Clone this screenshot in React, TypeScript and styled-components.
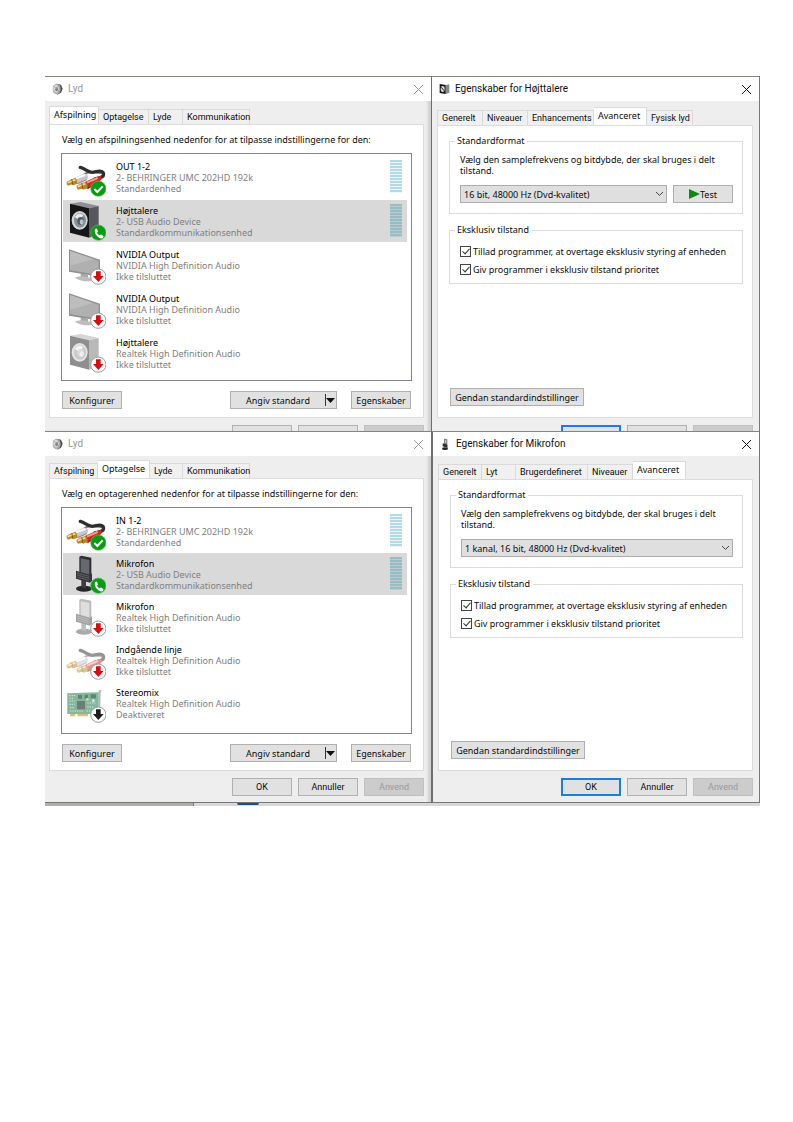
import React, { useState } from "react";
import styled, { createGlobalStyle, css } from "styled-components";

const GlobalStyle = createGlobalStyle`
  *, *::before, *::after { box-sizing: border-box; }
  body {
    margin: 0;
    background: #fff;
    color: #0c0c0c;
    font: 9px/11px "Noto Sans", "Open Sans", sans-serif;
  }
  button, select, input { font: inherit; color: inherit; margin: 0; }
`;

const Page = styled.main`
  padding: 76px 33px 40px 45px;
`;

const WindowGrid = styled.div`
  display: grid;
  grid-template-columns: minmax(0, 386fr) minmax(0, 329fr);
`;

const Window = styled.section<{ $active?: boolean; $clipped?: boolean }>`
  display: flex;
  flex-direction: column;
  background: #eeeeee;
  border-top: 1px solid #85857f;
  ${({ $active, $clipped }) =>
    $active
      ? css`
          border-left: ${$clipped ? 1 : 2}px solid #6e6e6e;
          border-right: 1px solid #777;
        `
      : css`
          box-shadow: inset -4px 0 3px -1px #cfcfcf;
        `}
`;

const TitleBar = styled.header<{ $active?: boolean }>`
  display: flex;
  align-items: center;
  gap: 5px;
  height: 24px;
  padding: 0 8px 0 7px;
  background: #fff;
  color: ${({ $active }) => ($active ? "#111" : "#999")};
`;

const Title = styled.h2`
  flex: 1;
  margin: 0;
  font: 400 10px/14px Roboto, "Noto Sans", sans-serif;
`;

const CloseButton = styled.button`
  display: flex;
  padding: 0;
  border: 0;
  background: none;
`;

const TabStrip = styled.div<{ $height: number; $active?: boolean }>`
  display: flex;
  align-items: flex-end;
  height: ${({ $height }) => $height}px;
  padding-left: ${({ $active }) => ($active ? 5 : 4)}px;
`;

const Tab = styled.button<{ $width: number }>`
  width: ${({ $width }) => $width}px;
  height: 15px;
  padding: 0 0 0 4px;
  border: 1px solid #dadada;
  border-bottom: 0;
  background: #f0f0f0;
  font-family: Roboto, "Noto Sans", sans-serif;
  text-align: left;
  white-space: nowrap;
  & + & { border-left: 0; }
  &[aria-selected="true"] {
    height: 18px;
    padding-bottom: 2px;
    background: #fff;
    font-family: "Noto Sans", sans-serif;
  }
`;

const Panel = styled.div<{ $active?: boolean }>`
  display: flex;
  flex: 1;
  flex-direction: column;
  min-height: 292px;
  margin: ${({ $active }) => ($active ? "0 6px 0 5px" : "0 7px 0 4px")};
  padding: 9px 11px 8px;
  border: 1px solid #dcdcdc;
  background: #fff;
`;

const Intro = styled.p`
  margin: 0 0 7px 1px;
  line-height: 12px;
`;

const DeviceList = styled.ul<{ $gap: number }>`
  display: flex;
  flex: 1;
  flex-direction: column;
  gap: ${({ $gap }) => $gap}px;
  margin: 0;
  padding: 2px 4px 6px 1px;
  border: 1px solid #82868c;
  list-style: none;
`;

const DeviceRow = styled.li<{ $selected?: boolean }>`
  display: flex;
  align-items: flex-start;
  height: 42px;
  padding: 1px 5px 0 3px;
  background: ${({ $selected }) => ($selected ? "#d9d9d9" : "transparent")};
`;

const DeviceText = styled.div`
  flex: 1;
  padding: 4px 0 0 10px;
  color: #808080;
  white-space: nowrap;
`;

const DeviceName = styled.div`
  color: #000;
`;

const Meter = styled.div<{ $selected?: boolean }>`
  width: 12px;
  height: 33px;
  margin-top: 3px;
  background: ${({ $selected }) =>
    $selected
      ? "repeating-linear-gradient(#98bcc4 0 2px, #bccbcd 2px 3px)"
      : "repeating-linear-gradient(#b3d9e6 0 2px, #eef6f8 2px 3px)"};
`;

const ButtonRow = styled.div`
  display: flex;
  justify-content: space-between;
  margin-top: 10px;
  padding: 0 1px;
`;

const ButtonPair = styled.div`
  display: flex;
  gap: 14px;
`;

const Button = styled.button<{ $wide?: boolean; $primary?: boolean }>`
  display: flex;
  align-items: center;
  justify-content: center;
  width: ${({ $wide }) => ($wide ? 134 : 60)}px;
  height: 18px;
  padding: 0;
  border: ${({ $primary }) => ($primary ? "2px solid #1a7fdc" : "1px solid #b0b0b0")};
  background: #e1e1e1;
  white-space: nowrap;
  &:disabled {
    border-color: #c0c0c0;
    background: #cccccc;
    color: #999;
  }
`;

const SplitButton = styled.div`
  display: flex;
  align-items: center;
  width: 107px;
  height: 18px;
  border: 1px solid #b0b0b0;
  background: #e1e1e1;
`;

const SplitMain = styled.button`
  flex: 1;
  padding: 0;
  border: 0;
  background: none;
`;

const SplitArrow = styled.button`
  display: flex;
  align-items: center;
  height: 12px;
  padding: 0 1px 0 0;
  border: 0;
  border-left: 1px solid #333;
  background: none;
`;

const Footer = styled.footer<{ $active?: boolean; $clipped?: boolean }>`
  display: flex;
  justify-content: flex-end;
  gap: 6px;
  padding: 7px ${({ $active }) => ($active ? 6 : 7)}px 6px;
  font-family: Roboto, "Noto Sans", sans-serif;
  ${({ $clipped }) =>
    $clipped
      ? css`
          height: 13px;
          overflow: hidden;
        `
      : css`
          border-bottom: 1px solid #777;
        `}
`;

const Group = styled.fieldset<{ $last?: boolean }>`
  min-width: 0;
  margin: 0 -2px ${({ $last }) => ($last ? 0 : 10)}px 0;
  padding: 0 9px ${({ $last }) => ($last ? 5 : 10)}px 10px;
  border: 1px solid #dcdcdc;
`;

const Legend = styled.legend`
  margin-left: -5px;
  padding: 0 3px 0 2px;
  line-height: 12px;
`;

const FormatText = styled.p`
  margin: 7px 0 9px;
`;

const FormatRow = styled.div`
  display: flex;
  gap: 6px;
`;

const SelectBox = styled.div`
  position: relative;
  flex: 1;
  svg {
    position: absolute;
    top: 7px;
    right: 4px;
    pointer-events: none;
  }
`;

const Select = styled.select`
  display: block;
  appearance: none;
  width: 100%;
  height: 18px;
  padding: 0 16px 0 3px;
  border: 1px solid #adadad;
  border-radius: 0;
  background: #dfdfdf;
`;

const CheckRow = styled.label<{ $first?: boolean }>`
  display: flex;
  align-items: center;
  gap: 2px;
  height: 18px;
  margin-top: ${({ $first }) => ($first ? 6 : 0)}px;
  white-space: nowrap;
`;

const Checkbox = styled.input`
  position: relative;
  appearance: none;
  width: 11px;
  height: 11px;
  border: 1px solid #444;
  background: #fff;
  &:checked::after {
    content: "";
    position: absolute;
    top: 0;
    left: 3px;
    width: 4px;
    height: 7px;
    border: solid #333;
    border-width: 0 1px 1px 0;
    transform: rotate(42deg);
  }
`;

const RestoreRow = styled.div`
  margin: auto 0 3px 1px;
`;

const DesktopStrip = styled.div`
  display: flex;
  height: 3px;
  background: #d8d8d8;
  &::before {
    content: "";
    flex: 0 1 149px;
    border-right: 1px solid #777;
    background: #b3b0a6;
  }
  &::after {
    content: "";
    width: 22px;
    height: 2px;
    margin-left: 43px;
    border-radius: 0 0 6px 6px;
    background: #1f4e80;
  }
`;

/* ---------- drawings ---------- */

type BadgeKind = "ok" | "phone" | "unplugged" | "disabled";
type Device = "cable" | "speaker" | "monitor" | "mic" | "card";

function Badge({ kind }: { kind: BadgeKind }) {
  if (kind === "ok" || kind === "phone") {
    return (
      <g>
        <circle cx="97" cy="95" r="23" fill="#0b9a14" stroke="#5fbf62" strokeWidth="2" />
        {kind === "ok" ? (
          <path d="M85 96l9 9 16-17" fill="none" stroke="#fff" strokeWidth="6" />
        ) : (
          <path
            d="M87 85q4-5 7 1l2 5q0 3-3 4 3 6 9 8 2-4 5-2l5 4q2 3-2 6-6 4-15-4-12-11-8-22z"
            fill="#fff"
          />
        )}
      </g>
    );
  }
  return (
    <g>
      <circle cx="97" cy="95" r="23" fill="#fff" stroke="#9a9a9a" strokeWidth="3" />
      <path
        d="M90 79h14v14h9L97 111 81 93h9z"
        fill={kind === "disabled" ? "#1c1c1c" : "#d90d0d"}
      />
    </g>
  );
}

function Cable() {
  return (
    <g>
      <path d="M52 54q12-10 26-9l34 4" fill="none" stroke="#77777b" strokeWidth="6" />
      <path
        d="M43 31C58 35 64 46 78 46c14-1 26-8 33 0 6 12-6 18-24 20"
        fill="none"
        stroke="#2e2e2e"
        strokeWidth="10"
        strokeLinecap="round"
      />
      <path d="M26 62l28-12q10-1 12 8 0 9-4 12L38 82l-12-3z" fill="#c6c6cc" />
      <path d="M30 64l28-10" stroke="#fafafa" strokeWidth="6" />
      <path d="M34 80l28-12" stroke="#8c8c92" strokeWidth="3" />
      <path d="M2 74l14-7 12-4q8 8 5 18l-11 4-4-3-12 4q-6-4-4-12z" fill="#bd842a" />
      <path d="M5 77l12-5 11-4" stroke="#f6e08f" strokeWidth="5" fill="none" />
      <path d="M17 68q4 8 2 15" stroke="#80560f" strokeWidth="3" fill="none" />
      <path d="M58 74l30-13 16-5 4 9-10 12-32 19-10-4z" fill="#c92c22" />
      <path d="M63 77l32-14" stroke="#f59c8c" strokeWidth="6" />
      <path d="M66 93l26-14" stroke="#8e1a14" strokeWidth="3" />
      <path d="M32 86l14-7 12-4q9 8 6 18l-12 5-4-3-12 3q-6-4-4-12z" fill="#bd842a" />
      <path d="M35 89l12-5 11-4" stroke="#f6e08f" strokeWidth="5" fill="none" />
      <path d="M47 80q4 8 2 15" stroke="#80560f" strokeWidth="3" fill="none" />
    </g>
  );
}

function Speaker({ faded }: { faded?: boolean }) {
  return (
    <g>
      <path d="M12 8L44 3l54 12-28 7z" fill={faded ? "#d6d6d6" : "#8d8f94"} />
      <path d="M70 22l28-7v80l-28 15z" fill={faded ? "#b9b9b9" : "#55575c"} />
      <path d="M12 8l58 14v88L12 95z" fill={faded ? "#8e8e8e" : "#161616"} />
      <ellipse cx="41" cy="58" rx="24" ry="28" fill={faded ? "#e4e4e4" : "#d2d6da"} />
      <ellipse cx="42" cy="58" rx="18" ry="22" fill={faded ? "#c9c9c9" : "#8a9097"} />
      <path d="M26 48q12-18 26-6l-10 16z" fill={faded ? "#f4f4f4" : "#e8ecef"} />
      <ellipse cx="44" cy="60" rx="10" ry="12" fill={faded ? "#dcdcdc" : "#555b62"} />
      <ellipse cx="47" cy="63" rx="6" ry="8" fill={faded ? "#efefef" : "#b9c0c6"} />
    </g>
  );
}

function Monitor() {
  return (
    <g>
      <path d="M44 84l22 6v10l-22-4z" fill="#a8a8a8" />
      <path d="M26 98q16-10 52 2l-2 8q-26 4-50-10z" fill="#bdbdbd" />
      <path d="M9 13l93 31v51L9 80z" fill="#8f8f8f" />
      <path d="M12 18l86 29v43L12 76z" fill="#b0b0b0" />
      <path d="M12 18l70 24L12 62z" fill="#bdbdbd" />
    </g>
  );
}

function Mic({ faded }: { faded?: boolean }) {
  return (
    <g>
      <ellipse cx="54" cy="104" rx="24" ry="9" fill={faded ? "#aaa" : "#25272a"} />
      <path d="M46 68l14 3v32l-14-3z" fill={faded ? "#bdbdbd" : "#3b3d40"} />
      <path d="M40 8l6-3 30 6v60l-4 4-32-8z" fill={faded ? "#bcbcbc" : "#2c2e31"} />
      <path d="M44 13l26 5v46l-26-6z" fill={faded ? "#dedede" : "#66696e"} />
      <path d="M30 50l42 12 6-4v22l-6 6-42-12z" fill={faded ? "#a2a2a2" : "#34363a"} />
      <path
        d="M33 57l36 10M33 63l36 10M33 69l36 10"
        stroke={faded ? "#c8c8c8" : "#74777b"}
        strokeWidth="2"
      />
    </g>
  );
}

function Card() {
  return (
    <g>
      <path d="M98 22h10l-4 4-2 70h-4z" fill="#b4b4b4" />
      <path d="M4 31l94-3v62l-30 3H4z" fill="#86b69c" />
      <path d="M12 93h16v7H12zM34 93h32v7H34z" fill="#d8bf7a" />
      <path d="M33 54h24v25H33z" fill="#707a78" />
      <path
        d="M10 38h18M10 46h14M10 54h16M10 64h16M12 74h14M12 84h40M62 84h26M64 60h24M64 72h20"
        stroke="#d4ebdd"
        strokeWidth="3"
        strokeDasharray="4 3"
      />
      <path d="M36 36h12v11H36zM56 35h10v12H56zM74 34h16v12H74z" fill="#57896f" />
      <circle cx="64" cy="49" r="4" fill="#e8d9a0" />
      <circle cx="82" cy="53" r="4" fill="#dfe9e2" />
    </g>
  );
}

function DeviceIcon({ device, badge }: { device: Device; badge: BadgeKind }) {
  const faded = badge === "unplugged" || badge === "disabled";
  return (
    <svg width="40" height="40" viewBox="0 0 120 120" aria-hidden="true">
      {device === "cable" && (
        <g opacity={faded ? 0.5 : 1}>
          <Cable />
        </g>
      )}
      {device === "speaker" && <Speaker faded={faded} />}
      {device === "monitor" && <Monitor />}
      {device === "mic" && <Mic faded={faded} />}
      {device === "card" && <Card />}
      <Badge kind={badge} />
    </svg>
  );
}

function SoundIcon() {
  return (
    <svg width="11" height="12" viewBox="0 0 33 36" aria-hidden="true">
      <path d="M14 2l13 3 5 12-5 12-11 6z" fill="#4c4c4c" />
      <ellipse cx="14" cy="18" rx="12" ry="16" fill="#a9abad" />
      <ellipse cx="12" cy="17" rx="8" ry="11" fill="#dadcde" />
      <ellipse cx="14" cy="19" rx="4" ry="6" fill="#7f8387" />
      <path d="M4 8l20 20M4 28L22 6" stroke="#8b8e91" strokeWidth="2" />
    </svg>
  );
}

function SpeakerSmall() {
  return (
    <svg width="11" height="12" viewBox="0 0 33 36" aria-hidden="true">
      <path d="M20 6l11-2v25l-11 4z" fill="#85888c" />
      <path d="M2 3l18 3v27L2 30z" fill="#151515" />
      <ellipse cx="11" cy="18" rx="6" ry="9" fill="#d5dadd" />
      <path d="M7 13l8 10" stroke="#222" strokeWidth="3" />
    </svg>
  );
}

function MicSmall() {
  return (
    <svg width="11" height="12" viewBox="0 0 33 36" aria-hidden="true">
      <ellipse cx="15" cy="32" rx="9" ry="4" fill="#222" />
      <path d="M12 2l10 2v26l-10-2z" fill="#7b7e82" />
      <path d="M8 16l14 4v9L8 25z" fill="#2f3134" />
      <path d="M15 6l4 1v8l-4-1z" fill="#c9ccce" />
    </svg>
  );
}

function CloseIcon() {
  return (
    <svg width="9" height="9" viewBox="0 0 9 9" aria-hidden="true">
      <path d="M0 0l9 9M9 0L0 9" fill="none" stroke="currentColor" />
    </svg>
  );
}

function Chevron() {
  return (
    <svg width="7" height="4" viewBox="0 0 7 4" aria-hidden="true">
      <path d="M0 0l3.500 3.400L7 0" fill="none" stroke="#444" />
    </svg>
  );
}

/* ---------- windows ---------- */

type TabInfo = [label: string, width: number];

interface FrameProps {
  title: string;
  icon: React.ReactNode;
  tabs: TabInfo[];
  current: string;
  active?: boolean;
  clipped?: boolean;
  children: React.ReactNode;
}

function DialogWindow({ title, icon, tabs, current, active, clipped, children }: FrameProps) {
  const stripHeight = (clipped ? 23 : 22) + (active ? 1 : 0);
  return (
    <Window $active={active} $clipped={clipped} aria-label={title}>
      <TitleBar $active={active}>
        {icon}
        <Title>{title}</Title>
        <CloseButton aria-label="Luk">
          <CloseIcon />
        </CloseButton>
      </TitleBar>
      <TabStrip role="tablist" $height={stripHeight} $active={active}>
        {tabs.map(([label, width]) => (
          <Tab key={label} role="tab" aria-selected={label === current} $width={width}>
            {label}
          </Tab>
        ))}
      </TabStrip>
      <Panel role="tabpanel" $active={active}>
        {children}
      </Panel>
      <Footer $active={active} $clipped={clipped}>
        <Button $primary={active} aria-label="OK">{clipped ? null : "OK"}</Button>
        <Button aria-label="Annuller">{clipped ? null : "Annuller"}</Button>
        <Button aria-label="Anvend" disabled>{clipped ? null : "Anvend"}</Button>
      </Footer>
    </Window>
  );
}

interface DeviceInfo {
  name: string;
  driver: string;
  status: string;
  device: Device;
  badge: BadgeKind;
}

function SoundPanel({ intro, devices, gap }: { intro: string; devices: DeviceInfo[]; gap: number }) {
  return (
    <>
      <Intro>{intro}</Intro>
      <DeviceList $gap={gap}>
        {devices.map((d, i) => (
          <DeviceRow key={i} $selected={d.badge === "phone"}>
            <DeviceIcon device={d.device} badge={d.badge} />
            <DeviceText>
              <DeviceName>{d.name}</DeviceName>
              <div>{d.driver}</div>
              <div>{d.status}</div>
            </DeviceText>
            {(d.badge === "ok" || d.badge === "phone") && <Meter $selected={d.badge === "phone"} />}
          </DeviceRow>
        ))}
      </DeviceList>
      <ButtonRow>
        <Button>Konfigurer</Button>
        <ButtonPair>
          <SplitButton>
            <SplitMain>Angiv standard</SplitMain>
            <SplitArrow aria-label="Flere valg">
              <svg width="9" height="5" viewBox="0 0 9 5" aria-hidden="true">
                <path d="M0 0h9L4.500 5z" fill="#111" />
              </svg>
            </SplitArrow>
          </SplitButton>
          <Button>Egenskaber</Button>
        </ButtonPair>
      </ButtonRow>
    </>
  );
}

function AdvancedPanel({ format, testable }: { format: string; testable?: boolean }) {
  const [override, setOverride] = useState(true);
  const [priority, setPriority] = useState(true);
  return (
    <>
      <Group>
        <Legend>Standardformat</Legend>
        <FormatText>Vælg den samplefrekvens og bitdybde, der skal bruges i delt tilstand.</FormatText>
        <FormatRow>
          <SelectBox>
            <Select aria-label="Standardformat">
              <option>{format}</option>
            </Select>
            <Chevron />
          </SelectBox>
          {testable && (
            <Button>
              <svg width="11" height="10" viewBox="0 0 11 10" aria-hidden="true">
                <path d="M0 0l11 5-11 5z" fill="#0a8a12" />
              </svg>
              Test
            </Button>
          )}
        </FormatRow>
      </Group>
      <Group $last>
        <Legend>Eksklusiv tilstand</Legend>
        <CheckRow $first>
          <Checkbox type="checkbox" checked={override} onChange={() => setOverride(!override)} />
          Tillad programmer, at overtage eksklusiv styring af enheden
        </CheckRow>
        <CheckRow>
          <Checkbox type="checkbox" checked={priority} onChange={() => setPriority(!priority)} />
          Giv programmer i eksklusiv tilstand prioritet
        </CheckRow>
      </Group>
      <RestoreRow>
        <Button $wide>Gendan standardindstillinger</Button>
      </RestoreRow>
    </>
  );
}

const behringer = "2- BEHRINGER UMC 202HD 192k";
const usb = "2- USB Audio Device";
const nvidia = "NVIDIA High Definition Audio";
const realtek = "Realtek High Definition Audio";

const playback: DeviceInfo[] = [
  { name: "OUT 1-2", driver: behringer, status: "Standardenhed", device: "cable", badge: "ok" },
  { name: "Højttalere", driver: usb, status: "Standardkommunikationsenhed", device: "speaker", badge: "phone" },
  { name: "NVIDIA Output", driver: nvidia, status: "Ikke tilsluttet", device: "monitor", badge: "unplugged" },
  { name: "NVIDIA Output", driver: nvidia, status: "Ikke tilsluttet", device: "monitor", badge: "unplugged" },
  { name: "Højttalere", driver: realtek, status: "Ikke tilsluttet", device: "speaker", badge: "unplugged" },
];

const recording: DeviceInfo[] = [
  { name: "IN 1-2", driver: behringer, status: "Standardenhed", device: "cable", badge: "ok" },
  { name: "Mikrofon", driver: usb, status: "Standardkommunikationsenhed", device: "mic", badge: "phone" },
  { name: "Mikrofon", driver: realtek, status: "Ikke tilsluttet", device: "mic", badge: "unplugged" },
  { name: "Indgående linje", driver: realtek, status: "Ikke tilsluttet", device: "cable", badge: "unplugged" },
  { name: "Stereomix", driver: realtek, status: "Deaktiveret", device: "card", badge: "disabled" },
];

export default function App() {
  return (
    <Page>
      <GlobalStyle />
      <WindowGrid>
        <DialogWindow
          title="Lyd"
          icon={<SoundIcon />}
          tabs={[["Afspilning", 50], ["Optagelse", 50], ["Lyde", 34], ["Kommunikation", 67]]}
          current="Afspilning"
          clipped
        >
          <SoundPanel
            intro="Vælg en afspilningsenhed nedenfor for at tilpasse indstillingerne for den:"
            devices={playback}
            gap={2}
          />
        </DialogWindow>
        <DialogWindow
          title="Egenskaber for Højttalere"
          icon={<SpeakerSmall />}
          tabs={[["Generelt", 46], ["Niveauer", 45], ["Enhancements", 66], ["Avanceret", 53], ["Fysisk lyd", 46]]}
          current="Avanceret"
          active
          clipped
        >
          <AdvancedPanel format="16 bit, 48000 Hz (Dvd-kvalitet)" testable />
        </DialogWindow>
        <DialogWindow
          title="Lyd"
          icon={<SoundIcon />}
          tabs={[["Afspilning", 49], ["Optagelse", 52], ["Lyde", 33], ["Kommunikation", 67]]}
          current="Optagelse"
        >
          <SoundPanel
            intro="Vælg en optagerenhed nedenfor for at tilpasse indstillingerne for den:"
            devices={recording}
            gap={1}
          />
        </DialogWindow>
        <DialogWindow
          title="Egenskaber for Mikrofon"
          icon={<MicSmall />}
          tabs={[["Generelt", 44], ["Lyt", 34], ["Brugerdefineret", 72], ["Niveauer", 45], ["Avanceret", 53]]}
          current="Avanceret"
          active
        >
          <AdvancedPanel format="1 kanal, 16 bit, 48000 Hz (Dvd-kvalitet)" />
        </DialogWindow>
      </WindowGrid>
      <DesktopStrip />
    </Page>
  );
}
